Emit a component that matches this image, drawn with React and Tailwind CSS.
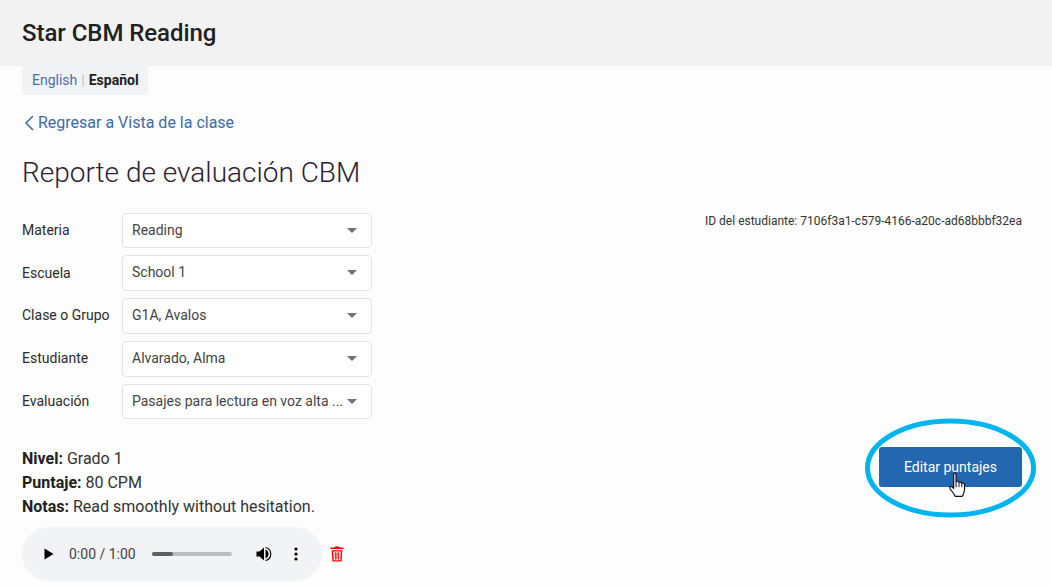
import React from "react";

const fields = [
  { label: "Materia", value: "Reading", box: "h-[35px]", labelClass: "" },
  { label: "Escuela", value: "School 1", box: "h-[36px] pb-[1px]", labelClass: "" },
  { label: "Clase o Grupo", value: "G1A, Avalos", box: "h-[36px] pb-[1px]", labelClass: "pb-[1px]" },
  { label: "Estudiante", value: "Alvarado, Alma", box: "h-[36px] pb-[1px]", labelClass: "pb-[1px]" },
  { label: "Evaluación", value: "Pasajes para lectura en voz alta ...", box: "h-[35px]", labelClass: "" },
];

const SelectRow = ({ label, value, box, labelClass }) => (
  <div className="flex items-center">
    <label className={`w-[100px] text-[14px] text-[#2b2b2b] ${labelClass}`}>{label}</label>
    <div className={`flex w-[250px] items-center justify-between rounded-[4px] border border-[#e2e2e2] bg-white pl-[9px] pr-[14px] ${box}`}>
      <span className="whitespace-nowrap text-[14px] text-[#444444]">{value}</span>
      <span className="h-0 w-0 border-x-[5px] border-t-[5px] border-x-transparent border-t-[#707070]" />
    </div>
  </div>
);

const AudioPlayer = () => (
  <div className="flex h-[54px] w-[300px] items-center rounded-full bg-[#f1f3f4] pl-[22px] text-[#333333]">
    <svg width="10" height="12" viewBox="0 0 10 12" className="mr-[15px]">
      <path d="M0.5 0.5 L9.5 6 L0.5 11.5 Z" fill="#000" />
    </svg>
    <span className="w-[83px] whitespace-nowrap text-[14px] text-[#444444]">0:00 / 1:00</span>
    <div className="h-[4px] w-[80px] rounded-full bg-[#bdbdbd]">
      <div className="h-[4px] w-[21px] rounded-full bg-[#5f5f5f]" />
    </div>
    <svg width="16" height="16" viewBox="0 0 16 16" className="ml-[24px]">
      <path d="M0.5 5.5 H3.5 L8 1.5 V14.5 L3.5 10.5 H0.5 Z" fill="#000" />
      <path d="M9.5 3.5 C13.5 4.5 13.5 11.5 9.5 12.5 Z" fill="#000" />
      <path d="M9.5 1.5 C16.5 3 16.5 13 9.5 14.5" fill="none" stroke="#000" strokeWidth="1.2" />
    </svg>
    <svg width="4" height="14" viewBox="0 0 4 14" className="ml-[22px]">
      <circle cx="2" cy="2" r="1.6" fill="#000" />
      <circle cx="2" cy="7" r="1.6" fill="#000" />
      <circle cx="2" cy="12" r="1.6" fill="#000" />
    </svg>
  </div>
);

const TrashIcon = () => (
  <svg width="14" height="16" viewBox="0 0 14 16" className="ml-[8px]">
    <path d="M4.5 1.5 L5.3 0.5 H8.7 L9.5 1.5 H13.5 V3 H0.5 V1.5 Z" fill="#f00000" />
    <path d="M1.7 4.3 H12.3 L11.6 15.5 H2.4 Z M3.2 5.6 L3.7 14.2 H10.3 L10.8 5.6 Z" fill="#f00000" fillRule="evenodd" />
    <path d="M5.3 6.3 V13.5 M7 6.3 V13.5 M8.7 6.3 V13.5" stroke="#f00000" strokeWidth="1" />
  </svg>
);

const HandCursor = () => (
  <svg width="20" height="26" viewBox="0 0 18 24" className="absolute left-[69px] top-[25px]">
    <path
      d="M5 2 C5 0.7 7.2 0.7 7.2 2 V9 C7.8 8.3 9.6 8.3 9.9 9.6 C10.6 9 12.2 9.2 12.5 10.4 C13.3 10 15 10.3 15 11.8 V16 C15 19 13.8 20.5 13 22.5 H6.5 C5.5 20.5 3.5 18 1.7 15.5 C0.7 14 2.3 12.6 3.5 13.6 L5 15 Z"
      fill="#fff"
      stroke="#111"
      strokeWidth="1.1"
      strokeLinejoin="round"
    />
    <path d="M7.2 9 V14 M9.9 9.6 V14 M12.5 10.4 V14" stroke="#111" strokeWidth="0.9" />
  </svg>
);

const App = () => {
  return (
    <div className="h-[587px] overflow-hidden bg-[#fdfdfd] font-['Roboto',sans-serif]">
      <header className="flex h-[66px] items-center bg-[#f2f2f2] px-[22px]">
        <h2 className="text-[24px] font-medium tracking-[-0.05px] text-[#212121]">Star CBM Reading</h2>
      </header>

      <main className="px-[22px]">
        <div className="flex h-[29px] w-[126px] items-center rounded-b-[4px] bg-[#f2f3f5] pl-[10px] text-[14px]">
          <a className="text-[#4a6ea9]">English</a>
          <span className="mx-[4px] text-[#c4c4c4]">|</span>
          <span className="font-bold text-[#212121]">Español</span>
        </div>

        <a className="mt-[16px] flex h-[24px] items-center text-[16px] text-[#3f6aa8]">
          <svg width="12" height="16" viewBox="0 0 12 16" className="ml-[1px] mr-[3px]">
            <path d="M10 1 L3 8 L10 15" fill="none" stroke="#3f6aa8" strokeWidth="1.5" />
          </svg>
          Regresar a Vista de la clase
        </a>

        <h1 className="mt-[17px] h-[42px] text-[28px] font-light leading-[42px] text-[#2a2233]">
          Reporte de evaluación CBM
        </h1>

        <div className="mt-[19px] flex justify-between pr-[8px]">
          <div className="flex flex-col gap-[7px]">
            {fields.map((field) => (
              <SelectRow key={field.label} {...field} />
            ))}
          </div>
          <p className="h-[16px] text-[12px] leading-[16px] text-[#333333]">
            ID del estudiante: 7106f3a1-c579-4166-a20c-ad68bbbf32ea
          </p>
        </div>

        <div className="mt-[28px] flex justify-between pr-[8px]">
          <div>
            <div className="text-[16px] leading-[24px] text-[#333333]">
              <p><b className="font-bold text-[#212121]">Nivel:</b> Grado 1</p>
              <p><b className="font-bold text-[#212121]">Puntaje:</b> 80 CPM</p>
              <p><b className="font-bold text-[#212121]">Notas:</b> Read smoothly without hesitation.</p>
            </div>
            <div className="mt-[8px] flex items-center">
              <AudioPlayer />
              <TrashIcon />
            </div>
          </div>

          <div className="relative h-[40px] w-[143px]">
            <button className="h-[40px] w-[143px] rounded-[3px] bg-[#2467b1] text-[14px] text-white">
              Editar puntajes
            </button>
            <HandCursor />
            <svg width="176" height="104" viewBox="0 0 176 104" className="absolute left-[-16px] top-[-31px]">
              <ellipse cx="87.5" cy="52" rx="83" ry="47" fill="none" stroke="#00b5ef" strokeWidth="5" />
            </svg>
          </div>
        </div>
      </main>
    </div>
  );
};

export default App;
